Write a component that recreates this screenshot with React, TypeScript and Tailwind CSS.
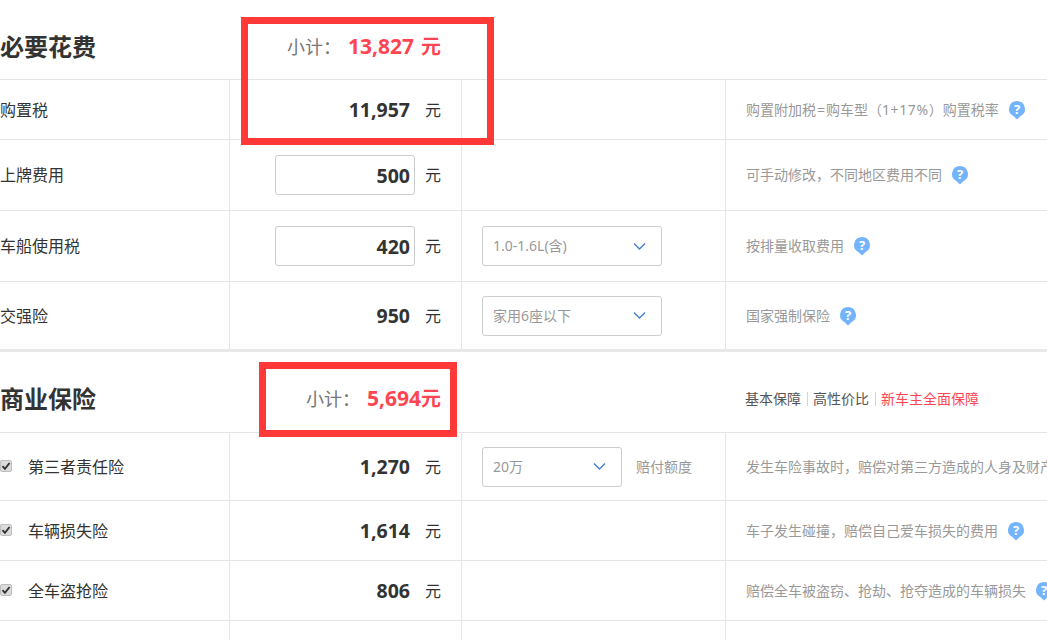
const font = "font-['Noto_Sans','Noto_Sans_CJK_SC',sans-serif]";

function Help() {
  return (
    <svg width="18" height="20" viewBox="0 0 18 20" className="shrink-0">
      <path d="M9 1a8 8 0 0 1 3.6 15.1L9 19.5l-3.6-3.4A8 8 0 0 1 9 1z" fill="#74b4fd" />
      <text x="9" y="14" textAnchor="middle" fontSize="13" fontWeight="700" fill="#fff" fontFamily="Noto Sans, sans-serif">?</text>
    </svg>
  );
}

function Select({ label, width }: { label: string; width: string }) {
  return (
    <div className={`${width} h-10 flex items-center justify-between pl-[10px] pr-[15px] border border-[#cccccc] rounded-[3px] text-sm text-[#999999]`}>
      <span>{label}</span>
      <svg width="13" height="9" viewBox="0 0 13 9">
        <path d="M1 1.5l5.5 5.5L12 1.5" fill="none" stroke="#4a80d0" strokeWidth="1.5" />
      </svg>
    </div>
  );
}

function Check() {
  return (
    <span className="w-[12px] h-[12px] -mt-[2px] rounded-[2px] bg-[#dcdcdc] border border-[#bdbdbd] flex items-center justify-center shrink-0">
      <svg width="10" height="10" viewBox="0 0 10 10">
        <path d="M1.5 5.2l2.4 2.6L8.6 2" fill="none" stroke="#333333" strokeWidth="1.9" />
      </svg>
    </span>
  );
}

type RowProps = {
  height: string;
  label: string;
  checked?: boolean;
  value: string;
  editable?: boolean;
  extra?: React.ReactNode;
  note?: React.ReactNode;
  help?: boolean;
  last?: boolean;
};

function Row({ height, label, checked, value, editable, extra, note, help = true, last }: RowProps) {
  return (
    <div className={`grid grid-cols-[229px_232px_264px_1fr] ${height} ${last ? '' : 'border-b border-[#e5e5e5]'}`}>
      <div className="flex items-center text-base text-[#333333]">
        {checked && <span className="mr-4"><Check /></span>}
        {label}
      </div>
      <div className="flex items-center justify-end gap-[10px] pr-5 border-l border-[#e5e5e5]">
        {editable ? (
          <input
            readOnly
            value={value}
            className="w-[140px] h-10 border border-[#cccccc] rounded-[3px] pr-[4px] text-right text-[19.5px] font-bold text-[#333333] outline-none"
          />
        ) : (
          <span className="pr-[5px] text-[19.5px] font-bold text-[#333333]">{value}</span>
        )}
        {value && <span className="text-base text-[#333333]">元</span>}
      </div>
      <div className="flex items-center gap-[14px] pl-5 border-l border-[#e5e5e5] text-sm text-[#999999]">{extra}</div>
      <div className="flex items-center gap-[9px] pl-5 border-l border-[#e5e5e5] text-sm text-[#999999] whitespace-nowrap">
        <span>{note}</span>
        {help && note && <Help />}
      </div>
    </div>
  );
}

function Header({ title, subtotal, unitGap, height, links }: { title: string; subtotal: string; unitGap?: boolean; height: string; links?: boolean }) {
  return (
    <div className={`grid grid-cols-[461px_264px_1fr] ${height} pt-[14px] border-b border-[#e5e5e5] items-center`}>
      <div className="flex items-center justify-between pr-5">
        <h2 className="text-2xl font-bold text-[#333333]">{title}</h2>
        <div className="flex items-center text-[#ff4552]">
          <span className="text-lg text-[#777777] mr-[7px]">小计：</span>
          <span className="text-[21px] font-bold">{subtotal}</span>
          <span className={`text-xl font-bold ${unitGap ? 'ml-[7px]' : ''}`}>元</span>
        </div>
      </div>
      <div />
      {links && (
        <div className="pl-5 flex items-center text-sm text-[#555555] whitespace-nowrap">
          基本保障
          <span className="w-px h-[14px] bg-[#d5d5d5] mx-[5.5px]" />
          高性价比
          <span className="w-px h-[14px] bg-[#d5d5d5] mx-[5.5px]" />
          <span className="text-[#ff4552]">新车主全面保障</span>
        </div>
      )}
    </div>
  );
}

export default function App() {
  return (
    <div className={`${font} relative w-[1047px] h-[640px] overflow-hidden bg-white`}>
      <Header title="必要花费" subtotal="13,827" unitGap height="h-[80px]" />
      <Row
        height="h-[60px]"
        label="购置税"
        value="11,957"
        note={
          <>
            购置附加税<span className="mx-px">=</span>购车型（<span className="tracking-[0.6px]">1+17%</span>）购置税率
          </>
        }
      />
      <Row height="h-[71px]" label="上牌费用" value="500" editable note="可手动修改，不同地区费用不同" />
      <Row
        height="h-[71px]"
        label="车船使用税"
        value="420"
        editable
        extra={<Select label="1.0-1.6L(含)" width="w-[180px]" />}
        note="按排量收取费用"
      />
      <Row
        height="h-[67px]"
        label="交强险"
        value="950"
        extra={<Select label="家用6座以下" width="w-[180px]" />}
        note="国家强制保险"
        last
      />
      <div className="h-[3px] bg-[#e8e8e8]" />

      <Header title="商业保险" subtotal="5,694" height="h-[81px]" links />
      <Row
        height="h-[68px]"
        label="第三者责任险"
        checked
        value="1,270"
        extra={
          <>
            <Select label="20万" width="w-[140px]" />
            <span>赔付额度</span>
          </>
        }
        note="发生车险事故时，赔偿对第三方造成的人身及财产损失的费用"
      />
      <Row height="h-[60px]" label="车辆损失险" checked value="1,614" note="车子发生碰撞，赔偿自己爱车损失的费用" />
      <Row height="h-[60px]" label="全车盗抢险" checked value="806" note="赔偿全车被盗窃、抢劫、抢夺造成的车辆损失" />
      <Row height="h-[60px]" label="" value="" last />

      <div className="absolute left-[241px] top-[17px] w-[253px] h-[128px] border-[7px] border-[#ff3838]" />
      <div className="absolute left-[259px] top-[362px] w-[198px] h-[75px] border-[7px] border-[#ff3838]" />
    </div>
  );
}
